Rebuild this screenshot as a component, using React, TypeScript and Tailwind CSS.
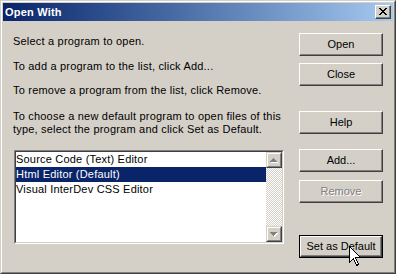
import React from "react";

const items = ["Source Code (Text) Editor", "Html Editor (Default)", "Visual InterDev CSS Editor"];

function PushButton({
  label,
  className = "",
  disabled = false,
  isDefault = false,
}: {
  label: string;
  className?: string;
  disabled?: boolean;
  isDefault?: boolean;
}) {
  const text = (
    <span className={disabled ? "text-[#808080] [text-shadow:1px_1px_0_#ffffff]" : "text-black"}>{label}</span>
  );

  if (isDefault) {
    return (
      <button className={`h-[23px] w-full border border-black bg-[#d4d0c8] p-0 ${className}`}>
        <span className="flex h-full w-full items-center justify-center border border-t-white border-l-white border-r-[#404040] border-b-[#404040] shadow-[inset_-1px_-1px_0_#808080]">
          {text}
        </span>
      </button>
    );
  }

  return (
    <button
      className={`flex h-[23px] w-full items-center justify-center border border-t-white border-l-white border-r-[#404040] border-b-[#404040] bg-[#d4d0c8] shadow-[inset_-1px_-1px_0_#808080] ${className}`}
    >
      {text}
    </button>
  );
}

function ArrowGlyph({ down = false }: { down?: boolean }) {
  // 7x4 pixel triangle, disabled look (gray with white shadow)
  const rows = down
    ? [
        [0, 7],
        [1, 5],
        [2, 3],
        [3, 1],
      ]
    : [
        [3, 1],
        [2, 3],
        [1, 5],
        [0, 7],
      ];
  return (
    <svg width="8" height="5" viewBox="0 0 8 5" shapeRendering="crispEdges">
      {rows.map(([x, w], y) => (
        <rect key={`s${y}`} x={x + 1} y={y + 1} width={w} height={1} fill="#ffffff" />
      ))}
      {rows.map(([x, w], y) => (
        <rect key={`g${y}`} x={x} y={y} width={w} height={1} fill="#808080" />
      ))}
    </svg>
  );
}

function ScrollButton({ down = false }: { down?: boolean }) {
  return (
    <div className="h-[16px] w-[16px] border border-t-[#d4d0c8] border-l-[#d4d0c8] border-r-[#404040] border-b-[#404040] bg-[#d4d0c8]">
      <div className="flex h-full w-full items-center justify-center border border-t-white border-l-white border-r-[#808080] border-b-[#808080]">
        <ArrowGlyph down={down} />
      </div>
    </div>
  );
}

function CloseGlyph() {
  const rows = [
    [0, 2, 6, 2],
    [1, 2, 5, 2],
    [2, 4],
    [3, 2],
    [2, 4],
    [1, 2, 5, 2],
    [0, 2, 6, 2],
  ];
  return (
    <svg width="8" height="7" viewBox="0 0 8 7" shapeRendering="crispEdges">
      {rows.map((r, y) => (
        <g key={y}>
          <rect x={r[0]} y={y} width={r[1]} height={1} fill="#000" />
          {r.length > 2 && <rect x={r[2]} y={y} width={r[3]} height={1} fill="#000" />}
        </g>
      ))}
    </svg>
  );
}

function Cursor() {
  return (
    <svg className="absolute left-[348px] top-[245px]" width="13" height="21" viewBox="0 0 13 21" shapeRendering="crispEdges">
      <path
        d="M0.5 0.5 L0.5 16.5 L4.5 12.5 L7.5 19.5 L9.5 18.5 L6.5 11.5 L11.5 11.5 Z"
        fill="#ffffff"
        stroke="#000000"
        strokeWidth="1"
      />
    </svg>
  );
}

export default function App() {
  return (
    <div className="relative h-[274px] w-[396px] border border-t-[#d4d0c8] border-l-[#d4d0c8] border-r-[#404040] border-b-[#404040] bg-[#d4d0c8] font-['Liberation_Sans',Arial,sans-serif] text-[11px] text-black">
      <div className="flex h-full flex-col border border-t-white border-l-white border-r-[#808080] border-b-[#808080] p-[1px]">
        {/* Title bar */}
        <div className="flex h-[18px] shrink-0 items-center bg-linear-to-r from-[#0a246a] to-[#a6caf0] pl-[2px] pr-[2px]">
          <span className="font-bold tracking-[0.2px] text-white">Open With</span>
          <button className="ml-auto h-[14px] w-[16px] border border-t-white border-l-white border-r-[#404040] border-b-[#404040] bg-[#d4d0c8] shadow-[inset_-1px_-1px_0_#808080]">
            <span className="flex h-full w-full items-center justify-center pb-[1px]">
              <CloseGlyph />
            </span>
          </button>
        </div>

        {/* Body */}
        <div className="flex flex-1">
          <div className="w-[281px] pl-[10px] pt-[14px] leading-[13px] tracking-[0.2px] whitespace-nowrap">
            <p>Select a program to open.</p>
            <p className="mt-[12px]">To add a program to the list, click Add...</p>
            <p className="mt-[11px]">To remove a program from the list, click Remove.</p>
            <p className="mt-[13px]">
              To choose a new default program to open files of this
              <br />
              type, select the program and click Set as Default.
            </p>

            {/* List box */}
            <div className="ml-[1px] mt-[14px] h-[94px] w-[270px] border border-t-[#808080] border-l-[#808080] border-r-white border-b-white">
              <div className="flex h-full border border-t-[#404040] border-l-[#404040] border-r-[#d4d0c8] border-b-[#d4d0c8] bg-white">
                <div className="flex-1">
                  {items.map((item, i) => (
                    <div
                      key={item}
                      className={`h-[15px] leading-[15px] ${
                        i === 1 ? "bg-[#0a246a] text-white" : "text-black"
                      }`}
                    >
                      {item}
                    </div>
                  ))}
                </div>
                <div className="flex w-[16px] flex-col">
                  <ScrollButton />
                  <div className="flex-1 bg-[image:repeating-conic-gradient(#d4d0c8_0%_25%,#ffffff_0%_50%)] bg-[length:2px_2px]" />
                  <ScrollButton down />
                </div>
              </div>
            </div>
          </div>

          {/* Buttons */}
          <div className="ml-auto mr-[10px] flex w-[84px] flex-col pt-[12px]">
            <PushButton label="Open" />
            <PushButton label="Close" className="mt-[7px]" />
            <PushButton label="Help" className="mt-[25px]" />
            <PushButton label="Add..." className="mt-[15px]" />
            <PushButton label="Remove" className="mt-[8px]" disabled />
            <PushButton label="Set as Default" className="mt-[32px]" isDefault />
          </div>
        </div>
      </div>
      <Cursor />
    </div>
  );
}
